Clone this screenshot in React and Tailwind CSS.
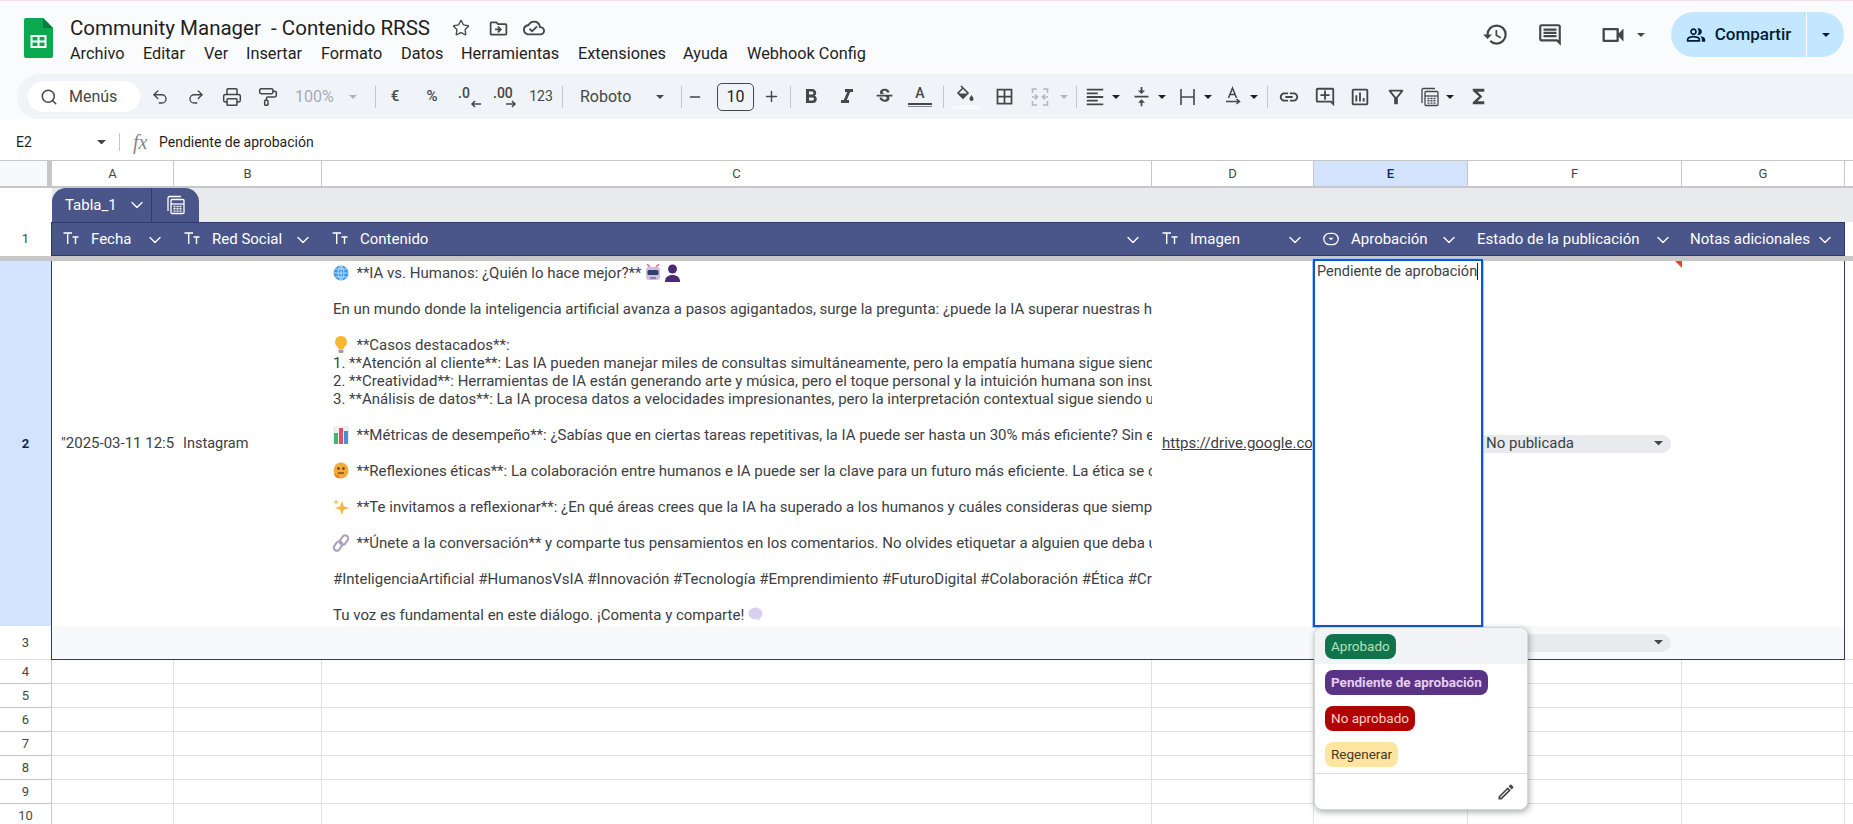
import React from 'react';
import { Undo2, Redo2, Printer, PaintRoller, Search, Star, ChevronDown, Minus, Plus } from 'lucide-react';
import {
  MdOutlineDriveFileMove, MdOutlineCloudDone, MdHistory, MdOutlineComment, MdOutlineVideocam, MdOutlinePeopleAlt,
  MdFormatBold, MdFormatItalic, MdStrikethroughS, MdBorderAll, MdFormatAlignLeft,
  MdVerticalAlignCenter, MdOutlineLink, MdOutlineAddComment, MdOutlineInsertChart, MdOutlineFilterAlt, MdFunctions, MdOutlineEdit,
} from 'react-icons/md';

const COLS = 'grid grid-cols-[52px_122px_148px_830px_162px_154px_214px_163px_8px]';

const Caret = ({ className = 'text-[#444746]', w = 8 }) => (
  <svg width={w} height={w / 2} viewBox="0 0 8 4" className={`shrink-0 ${className}`}><path d="M0 0h8L4 4z" fill="currentColor" /></svg>
);

const Sep = () => <div className="w-px h-[22px] bg-[#c7c7c7] shrink-0" />;

const Btn = ({ w = 'w-[36px]', children }) => (
  <div className={`${w} h-[30px] shrink-0 flex items-center justify-center text-[#444746]`}>{children}</div>
);

const SheetsLogo = () => (
  <svg width="29" height="40" viewBox="0 0 29 40" className="shrink-0">
    <path d="M2 0h17l10 10v28a2 2 0 0 1-2 2H2a2 2 0 0 1-2-2V2a2 2 0 0 1 2-2z" fill="#0ba94f" />
    <path d="M19 0l10 10h-8a2 2 0 0 1-2-2z" fill="#0a7a3d" />
    <path d="M6.500 17h16v13h-16z M8.500 19v3.500h5V19z M15.500 19v3.500h5V19z M8.500 24.500V28h5v-3.500z M15.500 24.500V28h5v-3.500z" fill="#fff" fillRule="evenodd" />
  </svg>
);

const Decimal = ({ label, dir }) => (
  <div className="relative w-[30px] h-[24px] text-[#444746]">
    <span className="absolute left-[3px] top-[-1px] text-[14px] font-medium leading-[18px]">{label}</span>
    <svg width="12" height="8" viewBox="0 0 12 8" className="absolute right-[3px] bottom-[1px]">
      {dir === 'left'
        ? <path d="M11 4H2M5 1L2 4l3 3" stroke="currentColor" strokeWidth="1.500" fill="none" />
        : <path d="M1 4h9M7 1l3 3-3 3" stroke="currentColor" strokeWidth="1.500" fill="none" />}
    </svg>
  </div>
);

const MergeIcon = () => (
  <svg width="20" height="20" viewBox="0 0 20 20" fill="none" stroke="#b4b7bb" strokeWidth="1.600">
    <path d="M7 2H2.500v4M2.500 14v4H7M13 2h4.500v4M17.500 14v4H13M2 10h5M5 7.500L7.500 10 5 12.500M18 10h-5M15 7.500L12.500 10l2.500 2.500" />
  </svg>
);

const WrapIcon = () => (
  <svg width="20" height="20" viewBox="0 0 20 20" fill="none" stroke="#444746" strokeWidth="1.600">
    <path d="M3 2v16M16 2v16M3 10h13" />
  </svg>
);

const RotateIcon = () => (
  <svg width="20" height="22" viewBox="0 0 20 22" fill="none" stroke="#444746" strokeWidth="1.500">
    <path d="M5.500 12L9.500 2l4 10M7 8.500h5M3 15.500h13M13.500 13l3 2.500-3 2.500" />
  </svg>
);

const TextColor = () => (
  <div className="flex flex-col items-center w-[24px] text-[#444746]">
    <span className="text-[14px] leading-[15px] font-medium">A</span>
    <div className="w-[24px] h-[2px] bg-[#444746] mt-[2px]" />
    <div className="w-[24px] h-px bg-[#888] mt-px" />
  </div>
);

const FillIcon = () => (
  <div className="flex flex-col items-center">
    <svg width="20" height="19" viewBox="0 0 20 19">
      <path d="M5 1l7 7-5 5-5-5 5-5" fill="none" stroke="#444746" strokeWidth="1.600" />
      <path d="M2.500 8.500h9L7 13z" fill="#444746" />
      <path d="M15.500 10c1.200 1.800 2 2.800 2 4a2 2 0 0 1-4 0c0-1.200.8-2.200 2-4z" fill="#444746" />
    </svg>
    <div className="w-[26px] h-px bg-white mt-[2px]" />
    <div className="w-[26px] h-px bg-white mt-px" />
  </div>
);

const CalcIcon = ({ size = 20, color = '#444746' }) => (
  <svg width={size} height={size} viewBox="0 0 20 20" fill="none" stroke={color} strokeWidth="1.300">
    <path d="M2 16V3a1.500 1.500 0 0 1 1.500-1.500H15" />
    <rect x="5" y="4.500" width="13" height="14" rx="1" />
    <path d="M5 9h13" />
    <path d="M7.500 11.500h2M10.500 11.500h2M13.500 11.500h2M7.500 13.800h2M10.500 13.800h2M13.500 13.800h2M7.500 16.100h2M10.500 16.100h2M13.500 16.100h2" strokeWidth="1.400" />
  </svg>
);

const TtIcon = () => (
  <svg width="16" height="14" viewBox="0 0 16 14" fill="none" stroke="#fff" strokeWidth="1.400" className="shrink-0 -mt-[3px]">
    <path d="M0.500 2h8.500M4.700 2v11M9.500 6h6M12.500 6v7" />
  </svg>
);

const ChipIcon = () => (
  <svg width="16" height="14" viewBox="0 0 16 14" fill="none" className="shrink-0 -mt-[2px]">
    <rect x="0.800" y="1.300" width="14.400" height="11.400" rx="5.700" stroke="#fff" strokeWidth="1.300" />
    <path d="M5.500 5.800h5L8 8.300z" fill="#fff" />
  </svg>
);

const HeaderCell = ({ icon, label, pl = 'pl-[11px]', gap = 'gap-[12px]' }) => (
  <div className={`flex items-center h-full min-w-0 ${pl} pr-[8px] pt-px ${gap} text-white text-[15px] whitespace-nowrap`}>
    {icon}
    <span className="flex-1 min-w-0">{label}</span>
    <ChevronDown size={20} strokeWidth={1.600} className="shrink-0 text-white" />
  </div>
);

const Globe = () => (
  <svg width="16" height="16" viewBox="0 0 16 16" className="inline-block align-[-3px] shrink-0">
    <circle cx="8" cy="8" r="7.500" fill="#3d9ae8" />
    <path d="M0.500 8h15M8 .5v15M2 4h12M2 12h12M8 .5C4 4 4 12 8 15.500M8 .5c4 3.500 4 11.500 0 15" stroke="#cfe6fa" strokeWidth=".8" fill="none" />
  </svg>
);

const Robot = () => (
  <svg width="16" height="18" viewBox="0 0 16 18" className="inline-block align-[-4px]">
    <path d="M2 0l3 3M14 0l-3 3" stroke="#e0679e" strokeWidth="1.500" />
    <rect x="1" y="3" width="14" height="13" rx="3" fill="#cdbbe0" />
    <rect x="2.500" y="6" width="11" height="5" rx="1.500" fill="#2d3f6d" />
    <rect x="5" y="13" width="6" height="2" fill="#8f7db0" />
  </svg>
);

const Person = () => (
  <svg width="15" height="18" viewBox="0 0 15 18" className="inline-block align-[-4px]">
    <circle cx="7.500" cy="5" r="4.500" fill="#4b2a7a" />
    <path d="M0 18c0-5 3-7 7.500-7S15 13 15 18z" fill="#4b2a7a" />
  </svg>
);

const Bulb = () => (
  <svg width="16" height="18" viewBox="0 0 16 18" className="inline-block align-[-4px]">
    <path d="M8 0a6 6 0 0 0-3.500 10.800c.6.5 1 1.200 1 2.200h5c0-1 .4-1.700 1-2.200A6 6 0 0 0 8 0z" fill="#f7b731" />
    <rect x="5.500" y="13.500" width="5" height="3.500" rx="1" fill="#a59ab8" />
  </svg>
);

const Bars = () => (
  <svg width="16" height="18" viewBox="0 0 16 18" className="inline-block align-[-4px]">
    <rect width="16" height="18" fill="#eceff1" />
    <rect x="1" y="7" width="4" height="11" fill="#45b36b" />
    <rect x="6" y="2" width="4" height="16" fill="#d9536f" />
    <rect x="11" y="5" width="4" height="13" fill="#4a90d9" />
  </svg>
);

const Thinking = () => (
  <svg width="16" height="18" viewBox="0 0 16 18" className="inline-block align-[-4px]">
    <ellipse cx="8" cy="8.500" rx="7.500" ry="8" fill="#f6a93b" />
    <circle cx="5.500" cy="6.500" r="1.300" fill="#5b3a1a" />
    <circle cx="10.500" cy="6.500" r="1.300" fill="#5b3a1a" />
    <path d="M5 11h6" stroke="#5b3a1a" strokeWidth="1.200" />
    <path d="M1 12c1 4 4 5 6 4l-1-3z" fill="#e8842a" />
  </svg>
);

const Sparkles = () => (
  <svg width="16" height="18" viewBox="0 0 16 18" className="inline-block align-[-4px]">
    <path d="M9 3l1.800 5.200L16 10l-5.200 1.800L9 17l-1.800-5.200L2 10l5.200-1.800z" fill="#f9b342" />
    <path d="M3 1l.9 2.100L6 4l-2.100.9L3 7l-.9-2.100L0 4l2.100-.9z" fill="#f7c76a" />
  </svg>
);

const LinkEmoji = () => (
  <svg width="16" height="18" viewBox="0 0 16 18" className="inline-block align-[-4px]" fill="none" stroke="#a8a0c0" strokeWidth="2">
    <rect x="8" y="1" width="6" height="10" rx="3" transform="rotate(35 11 6)" />
    <rect x="2" y="7" width="6" height="10" rx="3" transform="rotate(35 5 12)" />
  </svg>
);

const Bubble = () => (
  <svg width="15" height="15" viewBox="0 0 15 15" className="inline-block align-[-2px]">
    <ellipse cx="7.500" cy="6.500" rx="7" ry="6" fill="#d9d0ef" />
    <path d="M8 11l4 3-1-4z" fill="#d9d0ef" />
  </svg>
);

const contentLines = [
  <><Globe />&nbsp; **IA vs. Humanos: ¿Quién lo hace mejor?** <Robot /> <Person /></>,
  '',
  'En un mundo donde la inteligencia artificial avanza a pasos agigantados, surge la pregunta: ¿puede la IA superar nuestras habilidades?',
  '',
  <><Bulb />&nbsp; **Casos destacados**:</>,
  '1. **Atención al cliente**: Las IA pueden manejar miles de consultas simultáneamente, pero la empatía humana sigue siendo clave.',
  '2. **Creatividad**: Herramientas de IA están generando arte y música, pero el toque personal y la intuición humana son insustituibles.',
  '3. **Análisis de datos**: La IA procesa datos a velocidades impresionantes, pero la interpretación contextual sigue siendo un reto.',
  '',
  <><Bars />&nbsp; **Métricas de desempeño**: ¿Sabías que en ciertas tareas repetitivas, la IA puede ser hasta un 30% más eficiente? Sin embargo</>,
  '',
  <><Thinking />&nbsp; **Reflexiones éticas**: La colaboración entre humanos e IA puede ser la clave para un futuro más eficiente. La ética se convierte</>,
  '',
  <><Sparkles />&nbsp; **Te invitamos a reflexionar**: ¿En qué áreas crees que la IA ha superado a los humanos y cuáles consideras que siempre serán</>,
  '',
  <><LinkEmoji />&nbsp; **Únete a la conversación** y comparte tus pensamientos en los comentarios. No olvides etiquetar a alguien que deba unirse</>,
  '',
  '#InteligenciaArtificial #HumanosVsIA #Innovación #Tecnología #Emprendimiento #FuturoDigital #Colaboración #Ética #Creatividad',
  '',
  <>Tu voz es fundamental en este diálogo. ¡Comenta y comparte! <Bubble /></>,
];

const menuItems = [
  ['Archivo', 'w-[73px]'], ['Editar', 'w-[61px]'], ['Ver', 'w-[42px]'], ['Insertar', 'w-[75px]'], ['Formato', 'w-[80px]'],
  ['Datos', 'w-[60px]'], ['Herramientas', 'w-[117px]'], ['Extensiones', 'w-[105px]'], ['Ayuda', 'w-[64px]'], ['Webhook Config', 'w-[130px]'],
];

const chips = [
  ['Aprobado', 'bg-[#11734b] text-[#b7e1b9]', 'font-normal'],
  ['Pendiente de aprobación', 'bg-[#5a3286] text-[#e5cff2]', 'font-bold'],
  ['No aprobado', 'bg-[#b10202] text-[#ffcfc9]', 'font-normal'],
  ['Regenerar', 'bg-[#ffe5a0] text-[#473821]', 'font-normal'],
];

const EmptyRow = ({ n }) => (
  <div className={`${COLS} h-[24px] shrink-0`}>
    <div className="border-r border-b border-[#c7c7c7] flex items-center justify-center text-[13px] text-[#444746]">{n}</div>
    {[0, 1, 2, 3, 4, 5, 6].map((i) => (
      <div key={i} className="border-r border-b border-[#e1e1e1]" />
    ))}
    <div className="border-b border-[#e1e1e1]" />
  </div>
);

const Dropdown = ({ label }) => (
  <div className="ml-[6px] mr-[11px] h-[18px] rounded-full bg-[#e8eaed] flex items-center justify-between pl-[12px] pr-[8px] text-[15px] text-[#3c4043]">
    <span>{label}</span>
    <Caret className="text-[#444746]" w={9} />
  </div>
);

export default function App() {
  return (
    <div className="h-screen w-full overflow-hidden bg-[#f9fbfd] flex flex-col font-[Roboto,sans-serif] text-[#1f1f1f]">
      <div className="h-px bg-[#f6dfe3] shrink-0" />

      {/* title bar */}
      <div className="h-[73px] shrink-0 flex items-start pl-[24px] pr-[9px]">
        <div className="mt-[17px]"><SheetsLogo /></div>
        <div className="ml-[17px] mt-[11px] flex flex-col">
          <div className="flex items-center h-[32px]">
            <span className="text-[20.500px] text-[#1f1f1f] whitespace-pre w-[382px]">Community Manager  - Contenido RRSS</span>
            <Star size={18} strokeWidth={1.800} className="text-[#444746]" />
            <MdOutlineDriveFileMove size={21} className="text-[#444746] ml-[18px]" />
            <MdOutlineCloudDone size={22} className="text-[#444746] ml-[14px]" />
          </div>
          <div className="flex items-center h-[20px] text-[16.300px] text-[#1f1f1f] whitespace-nowrap">
            {menuItems.map(([label, w]) => (
              <span key={label} className={w}>{label}</span>
            ))}
          </div>
        </div>
        <div className="ml-auto flex items-center h-[45px] mt-[11px]">
          <MdHistory size={27} className="text-[#444746]" />
          <MdOutlineComment size={26} className="text-[#444746] ml-[28px]" />
          <MdOutlineVideocam size={28} className="text-[#444746] ml-[36px]" />
          <Caret className="text-[#444746] ml-[10px]" w={8} />
          <div className="ml-[26px] h-[45px] w-[173px] rounded-full bg-[#c2e7ff] flex items-center text-[#001d35]">
            <div className="flex-1 flex items-center justify-center gap-[9px] h-full border-r border-[#f9fbfd]">
              <MdOutlinePeopleAlt size={20} />
              <span className="text-[17px] font-medium">Compartir</span>
            </div>
            <div className="w-[37px] flex items-center justify-center"><Caret className="text-[#001d35]" /></div>
          </div>
        </div>
      </div>

      {/* toolbar */}
      <div className="ml-[17px] h-[45px] shrink-0 rounded-l-full bg-[#f0f4f9] flex items-center pl-[11px]">
        <div className="w-[112px] h-[31px] rounded-full bg-white flex items-center pl-[12px] gap-[11px] text-[#444746] shrink-0">
          <Search size={18} strokeWidth={2} />
          <span className="text-[16px]">Menús</span>
        </div>
        <div className="w-[2px]" />
        <Btn><Undo2 size={18} strokeWidth={1.800} /></Btn>
        <Btn><Redo2 size={18} strokeWidth={1.800} /></Btn>
        <Btn><Printer size={20} strokeWidth={1.800} /></Btn>
        <Btn><PaintRoller size={20} strokeWidth={1.800} /></Btn>
        <div className="w-[89px] flex items-center pl-[9px] gap-[15px] text-[#a8abb0] text-[16px] shrink-0">
          <span>100%</span><Caret className="text-[#b0b3b7]" />
        </div>
        <Sep />
        <Btn w="w-[38px]"><span className="text-[15px] font-medium">€</span></Btn>
        <Btn><span className="text-[15px] font-medium">%</span></Btn>
        <Btn w="w-[40px]"><Decimal label=".0" dir="left" /></Btn>
        <Btn w="w-[30px]"><Decimal label=".00" dir="right" /></Btn>
        <Btn w="w-[42px]"><span className="text-[14px]">123</span></Btn>
        <Sep />
        <div className="w-[118px] flex items-center pl-[17px] text-[16px] text-[#444746] shrink-0">
          <span className="w-[76px]">Roboto</span><Caret />
        </div>
        <Sep />
        <div className="w-[26px] flex justify-center text-[#444746] shrink-0"><Minus size={16} strokeWidth={2} /></div>
        <div className="ml-[9px] w-[37px] h-[28px] border border-[#444746] rounded-[5px] flex items-center justify-center text-[16px] text-[#1f1f1f] shrink-0">10</div>
        <div className="w-[34px] flex justify-center text-[#444746] shrink-0"><Plus size={17} strokeWidth={2} /></div>
        <div className="w-[2px]" />
        <Sep />
        <Btn w="w-[40px]"><MdFormatBold size={24} /></Btn>
        <Btn w="w-[32px]"><MdFormatItalic size={24} /></Btn>
        <Btn w="w-[42px]"><MdStrikethroughS size={21} /></Btn>
        <Btn w="w-[30px]"><TextColor /></Btn>
        <div className="w-[8px]" />
        <Sep />
        <Btn w="w-[44px]"><FillIcon /></Btn>
        <Btn w="w-[32px]"><MdBorderAll size={21} /></Btn>
        <Btn w="w-[40px]"><MergeIcon /></Btn>
        <Caret className="text-[#b4b7bb] mr-[8px]" />
        <Sep />
        <Btn><MdFormatAlignLeft size={22} /></Btn>
        <Caret className="-ml-[1px]" />
        <Btn w="w-[42px]"><MdVerticalAlignCenter size={21} /></Btn>
        <Caret className="-ml-[4px]" />
        <Btn w="w-[44px]"><WrapIcon /></Btn>
        <Caret className="-ml-[6px]" />
        <Btn w="w-[42px]"><RotateIcon /></Btn>
        <Caret className="-ml-[4px]" />
        <div className="w-[9px]" />
        <Sep />
        <Btn w="w-[42px]"><MdOutlineLink size={22} /></Btn>
        <Btn w="w-[29px]"><MdOutlineAddComment size={22} /></Btn>
        <Btn w="w-[42px]"><MdOutlineInsertChart size={22} /></Btn>
        <Btn w="w-[30px]"><MdOutlineFilterAlt size={22} /></Btn>
        <Btn w="w-[38px]"><CalcIcon /></Btn>
        <Caret className="-ml-[3px]" />
        <Btn w="w-[48px]"><MdFunctions size={23} /></Btn>
      </div>

      {/* formula bar */}
      <div className="h-[42px] shrink-0 bg-white border-b border-[#c7c7c7] pt-[5px] flex items-center text-[14px] text-[#1f1f1f]">
        <span className="w-[97px] pl-[16px]">E2</span>
        <Caret className="text-[#444746]" w={9} />
        <div className="w-px h-[18px] bg-[#c7c7c7] ml-[13px]" />
        <span className="ml-[13px] w-[26px] font-['Liberation_Serif',serif] italic text-[20px] text-[#80868b]">fx</span>
        <span>Pendiente de aprobación</span>
      </div>

      {/* sheet */}
      <div className="flex-1 min-h-0 bg-white flex flex-col overflow-hidden">
        {/* column letters */}
        <div className={`${COLS} h-[27px] shrink-0 border-b-2 border-[#c7c7c7] text-[13px] text-[#444746]`}>
          <div className="bg-[#f8f9fa] border-r-[5px] border-[#c7c7c7]" />
          {['A', 'B', 'C', 'D'].map((l) => (
            <div key={l} className="border-r border-[#c7c7c7] flex items-center justify-center">{l}</div>
          ))}
          <div className="border-r border-[#c7c7c7] bg-[#d3e3fd] text-[#0b2a5b] font-medium flex items-center justify-center">E</div>
          {['F', 'G'].map((l) => (
            <div key={l} className="border-r border-[#c7c7c7] flex items-center justify-center">{l}</div>
          ))}
          <div />
        </div>

        {/* table tab strip */}
        <div className="h-[34px] shrink-0 flex">
          <div className="w-[52px] bg-white shrink-0" />
          <div className="flex-1 bg-[#e8eaed] flex items-end">
            <div className="h-[34px] w-[147px] rounded-t-[14px] bg-[#4a5589] flex text-white">
              <div className="w-[100px] border-r border-[#2f3a6b] flex items-center pl-[13px] gap-[10px]">
                <span className="text-[15px]">Tabla_1</span>
                <ChevronDown size={20} strokeWidth={1.600} />
              </div>
              <div className="flex-1 flex items-center justify-center"><CalcIcon size={20} color="#fff" /></div>
            </div>
          </div>
        </div>

        {/* row 1 */}
        <div className={`${COLS} h-[34px] shrink-0`}>
          <div className="bg-white flex items-center justify-center text-[13px] text-[#444746] border-r border-[#2f3a6b]">1</div>
          <div className="col-span-7 bg-[#4a5589] border-t border-b border-r border-[#2f3a6b] grid grid-cols-[121px_148px_830px_162px_154px_214px_162px]">
            <HeaderCell icon={<TtIcon />} label="Fecha" />
            <HeaderCell icon={<TtIcon />} label="Red Social" />
            <HeaderCell icon={<TtIcon />} label="Contenido" />
            <HeaderCell icon={<TtIcon />} label="Imagen" />
            <HeaderCell icon={<ChipIcon />} label="Aprobación" pl="pl-[10px]" />
            <HeaderCell label="Estado de la publicación" pl="pl-[10px]" gap="gap-[4px]" />
            <HeaderCell label="Notas adicionales" pl="pl-[9px]" gap="gap-[2px]" />
          </div>
          <div />
        </div>

        {/* frozen divider */}
        <div className="h-[5px] shrink-0 bg-[#c7c7c7]" />

        {/* row 2 */}
        <div className={`${COLS} h-[365px] shrink-0 text-[15px] text-[#3c4043]`}>
          <div className="bg-[#d3e3fd] border-r border-[#2f3a6b] flex items-center justify-center text-[13px] font-bold text-[#0b2a5b]">2</div>
          <div className="flex items-center pl-[9px] overflow-hidden whitespace-pre">"2025-03-11 12:59:00"</div>
          <div className="flex items-center pl-[9px] overflow-hidden whitespace-pre text-[14.500px]">Instagram</div>
          <div className="pt-[3px] pl-[11px] overflow-hidden">
            {contentLines.map((line, i) => (
              <div key={i} className="h-[18px] leading-[18px] whitespace-pre">{line}</div>
            ))}
          </div>
          <div className="flex items-center pl-[10px] overflow-hidden whitespace-pre underline">https://drive.google.com/file/d/1</div>
          <div className="relative">
            <div className="absolute -top-[2px] -left-[1px] w-[170px] h-[368px] bg-white border-[2.500px] border-[#0b57d0] outline outline-[1.500px] outline-[#a8c7fa] z-10 pl-[2px] pt-[2px] leading-[18px] whitespace-pre text-[14.500px]">
              Pendiente de aprobación<span className="border-r border-[#1f1f1f]" />
            </div>
          </div>
          <div className="relative flex items-center">
            <div className="flex-1"><Dropdown label="No publicada" /></div>
            <div className="absolute top-0 right-0 w-0 h-0 border-t-[7px] border-l-[7px] border-t-[#ea4335] border-l-transparent" />
          </div>
          <div className="border-r border-[#2f3a6b]" />
          <div />
        </div>

        {/* row 3 */}
        <div className={`${COLS} h-[34px] shrink-0 text-[14.500px]`}>
          <div className="bg-white border-r border-b border-[#2f3a6b] flex items-center justify-center text-[13px] text-[#444746] relative">
            3
            <div className="absolute left-0 right-0 bottom-[-1px] h-px bg-[#e1e1e1]" />
          </div>
          <div className="bg-[#f8f9fa] border-b border-[#2f3a6b]" />
          <div className="bg-[#f8f9fa] border-b border-[#2f3a6b]" />
          <div className="bg-[#f8f9fa] border-b border-[#2f3a6b]" />
          <div className="bg-[#f8f9fa] border-b border-[#2f3a6b]" />
          <div className="bg-[#f8f9fa] border-b border-[#2f3a6b] relative">
            {/* option popup */}
            <div className="absolute top-[1px] left-0 w-[214px] h-[183px] bg-white rounded-[8px] border border-[#d5d7da] shadow-[1px_2px_6px_rgba(60,64,67,0.45)] z-20 overflow-hidden flex flex-col text-[13.500px]">
              {chips.map(([label, color, weight], i) => (
                <div key={label} className={`h-[36px] shrink-0 flex items-center pl-[10px] ${i === 0 ? 'bg-[#f1f3f4]' : ''}`}>
                  <span className={`h-[25px] leading-[25px] px-[6px] rounded-[8px] whitespace-pre ${color} ${weight}`}>{label}</span>
                </div>
              ))}
              <div className="mt-[1px] h-px bg-[#dadce0] shrink-0" />
              <div className="flex-1 flex items-center justify-end pr-[11px] text-[#444746]"><MdOutlineEdit size={20} /></div>
            </div>
          </div>
          <div className="bg-[#f8f9fa] border-b border-[#2f3a6b] flex items-center"><div className="flex-1"><Dropdown label="" /></div></div>
          <div className="bg-[#f8f9fa] border-b border-r border-[#2f3a6b]" />
          <div className="border-b border-[#e1e1e1]" />
        </div>

        {[4, 5, 6, 7, 8, 9, 10].map((n) => <EmptyRow key={n} n={n} />)}
      </div>
    </div>
  );
}
